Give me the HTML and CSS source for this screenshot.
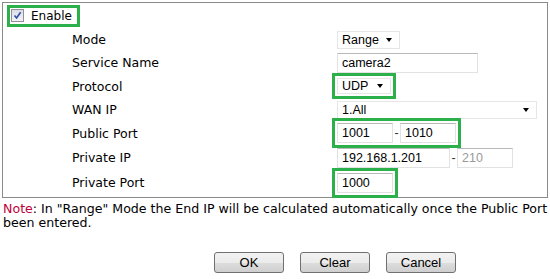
FILE: index.html
```html
<!DOCTYPE html>
<html lang="en">
<head>
	<meta charset="UTF-8" />
	<title>Port Redirection</title>
	<link rel="stylesheet" href="styles.css">
</head>
<body>
	<div class="panel">
		<div class="enable-row">
			<label class="enable mark">
				<span class="check">
					<svg width="9" height="9" viewBox="0 0 9 9"><path d="M1.5 4.5 L3.6 7 L7.6 1.2" fill="none" stroke="#2b4fa8" stroke-width="1.6" /></svg>
				</span>
				Enable
			</label>
		</div>

		<div class="form">
			<div class="lbl">Mode</div>
			<div class="val"><span class="select w-range">Range<i class="caret"></i></span></div>

			<div class="lbl">Service Name</div>
			<div class="val"><span class="input w-name">camera2</span></div>

			<div class="lbl">Protocol</div>
			<div class="val"><span class="select w-proto mark">UDP<i class="caret"></i></span></div>

			<div class="lbl">WAN IP</div>
			<div class="val"><span class="select w-wan">1.All<i class="caret"></i></span></div>

			<div class="lbl">Public Port</div>
			<div class="val">
				<span class="pair mark">
					<span class="input w-port">1001</span>
					<span class="dash">-</span>
					<span class="input w-port">1010</span>
				</span>
			</div>

			<div class="lbl">Private IP</div>
			<div class="val">
				<span class="input w-ip">192.168.1.201</span>
				<span class="dash">-</span>
				<span class="input w-end disabled">210</span>
			</div>

			<div class="lbl">Private Port</div>
			<div class="val"><span class="input w-port mark">1000</span></div>
		</div>
	</div>

	<p class="note"><span class="note-tag">Note</span>: In "Range" Mode the End IP will be calculated automatically once the Public Port been entered.</p>

	<div class="buttons">
		<button>OK</button>
		<button>Clear</button>
		<button>Cancel</button>
	</div>
</body>
</html>
```

FILE: styles.css
```css
body {
	margin: 0;
	background: #fff;
	color: #000;
	font-family: "DejaVu Sans", Verdana, sans-serif;
	font-size: 12px;
}

.panel {
	margin: 2px 2px 0 2px;
	height: 194px;
	border: 1px solid #8a8a8a;
}

.mark {
	outline: 3px solid #2bb04a;
	outline-offset: 2px;
}

.enable-row {
	height: 25px;
	display: flex;
	align-items: center;
	padding-left: 8px;
}

.enable {
	display: flex;
	align-items: center;
	gap: 7px;
	font-size: 12px;
	outline-offset: 1px;
	padding-right: 4px;
}

.check {
	width: 11px;
	height: 11px;
	border: 1px solid #8f8f9d;
	background: linear-gradient(#dcdde3, #f4f4f6);
	display: flex;
	align-items: center;
	justify-content: center;
}

.form {
	display: grid;
	grid-template-columns: 265px 1fr;
	grid-template-rows: 23px 23px 24px 23px 24px 25px 25px;
	margin-left: 69px;
}

.lbl {
	display: flex;
	align-items: center;
	font-size: 12.5px;
}

.val {
	display: flex;
	align-items: center;
	font-family: "Liberation Sans", Arial, sans-serif;
	font-size: 12.5px;
}

.input, .select {
	box-sizing: border-box;
	height: 20px;
	display: flex;
	align-items: center;
	padding: 0 4px;
	background: #fff;
	border: 1px solid #e2e2e2;
	border-top-color: #b9b9b9;
}

.select {
	height: 18px;
	justify-content: space-between;
	border-color: #e6e6e6;
}

.caret {
	width: 0;
	height: 0;
	border-left: 3.5px solid transparent;
	border-right: 3.5px solid transparent;
	border-top: 4px solid #000;
	margin-right: 3px;
}

.w-range { width: 63px; }
.w-name { width: 141px; }
.w-proto { width: 54px; height: 16px; }
.w-wan { width: 200px; }
.w-port { width: 56px; }
.w-ip { width: 113px; }
.w-end { width: 56px; }

.disabled {
	color: #9a9a9a;
}

.pair {
	display: flex;
	align-items: center;
}

.dash {
	width: 7px;
	text-align: center;
	color: #333;
}

.note {
	margin: 4px 0 0 0;
	padding: 0 1px 0 3px;
	line-height: 14px;
	font-size: 12.6px;
}

.note-tag {
	color: #c0003a;
}

.buttons {
	display: flex;
	justify-content: center;
	gap: 16px;
	margin-top: 22px;
	padding-left: 120px;
}

button {
	width: 70px;
	height: 21px;
	font-family: "Liberation Sans", Arial, sans-serif;
	font-size: 13px;
	color: #000;
	border: 1px solid #707070;
	border-radius: 3px;
	background: linear-gradient(#f2f2f2 0%, #ebebeb 50%, #dddddd 51%, #cfcfcf 100%);
	padding: 0;
}
```
